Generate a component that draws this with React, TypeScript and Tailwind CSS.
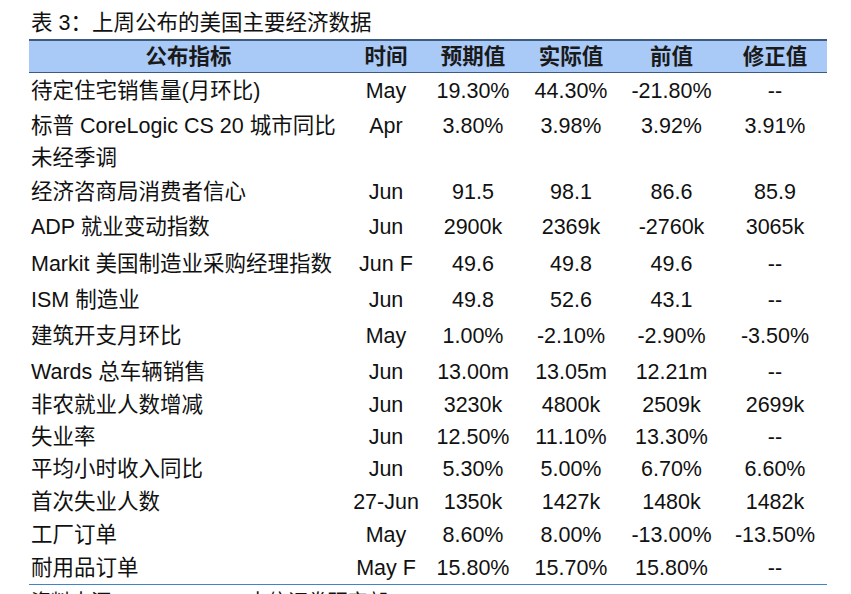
import React from 'react';

type Row = { name: React.ReactNode; time: string; exp: string; act: string; prev: string; rev: string; h: string };

const rows: Row[] = [
  { name: '待定住宅销售量(月环比)', time: 'May', exp: '19.30%', act: '44.30%', prev: '-21.80%', rev: '--', h: 'h-[36px]' },
  {
    name: (
      <>
        标普 CoreLogic CS 20 城市同比
        <br />
        未经季调
      </>
    ),
    time: 'Apr',
    exp: '3.80%',
    act: '3.98%',
    prev: '3.92%',
    rev: '3.91%',
    h: 'h-[66px]',
  },
  { name: '经济咨商局消费者信心', time: 'Jun', exp: '91.5', act: '98.1', prev: '86.6', rev: '85.9', h: 'h-[34px]' },
  { name: 'ADP 就业变动指数', time: 'Jun', exp: '2900k', act: '2369k', prev: '-2760k', rev: '3065k', h: 'h-[36px]' },
  { name: 'Markit 美国制造业采购经理指数', time: 'Jun F', exp: '49.6', act: '49.8', prev: '49.6', rev: '--', h: 'h-[37px]' },
  { name: 'ISM 制造业', time: 'Jun', exp: '49.8', act: '52.6', prev: '43.1', rev: '--', h: 'h-[36px]' },
  { name: '建筑开支月环比', time: 'May', exp: '1.00%', act: '-2.10%', prev: '-2.90%', rev: '-3.50%', h: 'h-[36px]' },
  { name: 'Wards 总车辆销售', time: 'Jun', exp: '13.00m', act: '13.05m', prev: '12.21m', rev: '--', h: 'h-[35px]' },
  { name: '非农就业人数增减', time: 'Jun', exp: '3230k', act: '4800k', prev: '2509k', rev: '2699k', h: 'h-[32px]' },
  { name: '失业率', time: 'Jun', exp: '12.50%', act: '11.10%', prev: '13.30%', rev: '--', h: 'h-[32px]' },
  { name: '平均小时收入同比', time: 'Jun', exp: '5.30%', act: '5.00%', prev: '6.70%', rev: '6.60%', h: 'h-[32px]' },
  { name: '首次失业人数', time: '27-Jun', exp: '1350k', act: '1427k', prev: '1480k', rev: '1482k', h: 'h-[33px]' },
  { name: '工厂订单', time: 'May', exp: '8.60%', act: '8.00%', prev: '-13.00%', rev: '-13.50%', h: 'h-[34px]' },
  { name: '耐用品订单', time: 'May F', exp: '15.80%', act: '15.70%', prev: '15.80%', rev: '--', h: 'h-[32px]' },
];

const cols = 'grid grid-cols-[319px_76px_98px_98px_103px_104px]';

const App: React.FC = () => {
  return (
    <div className="w-[851px] h-[594px] overflow-hidden bg-white text-[#111] font-['Liberation_Sans','Noto_Sans_CJK_SC',sans-serif]">
      {/* Title */}
      <div className="pl-[31px] pt-[11px] h-[39px] text-[21.5px] leading-[24px]">表 3：上周公布的美国主要经济数据</div>

      <div className="ml-[29px] w-[798px]">
        {/* Header */}
        <div className={`${cols} h-[34px] items-center bg-[#a9c9f7] border-t-2 border-b border-[#3d5b80] text-[21.5px] font-bold text-[#1a1a1a]`}>
          <div className="text-center">公布指标</div>
          <div className="text-center">时间</div>
          <div className="text-center">预期值</div>
          <div className="text-center">实际值</div>
          <div className="text-center">前值</div>
          <div className="text-center">修正值</div>
        </div>

        {/* Body */}
        <div className="border-b-[1.5px] border-[#3d85c6] text-[21.5px]">
          {rows.map((r, idx) => (
            <div key={idx} className={`${cols} ${r.h} ${idx === 1 ? 'items-start pt-[1px] leading-[32px]' : 'items-center leading-[26px]'}`}>
              <div className="pl-[2px] whitespace-nowrap">{r.name}</div>
              <div className="text-center whitespace-nowrap">{r.time}</div>
              <div className="text-center">{r.exp}</div>
              <div className="text-center">{r.act}</div>
              <div className="text-center">{r.prev}</div>
              <div className="text-center">{r.rev}</div>
            </div>
          ))}
        </div>
      </div>

      {/* Source */}
      <div className="pl-[31px] pt-[5px] text-[20px] leading-[24px]">资料来源：Bloomberg，中信证券研究部</div>
    </div>
  );
};

export default App;
